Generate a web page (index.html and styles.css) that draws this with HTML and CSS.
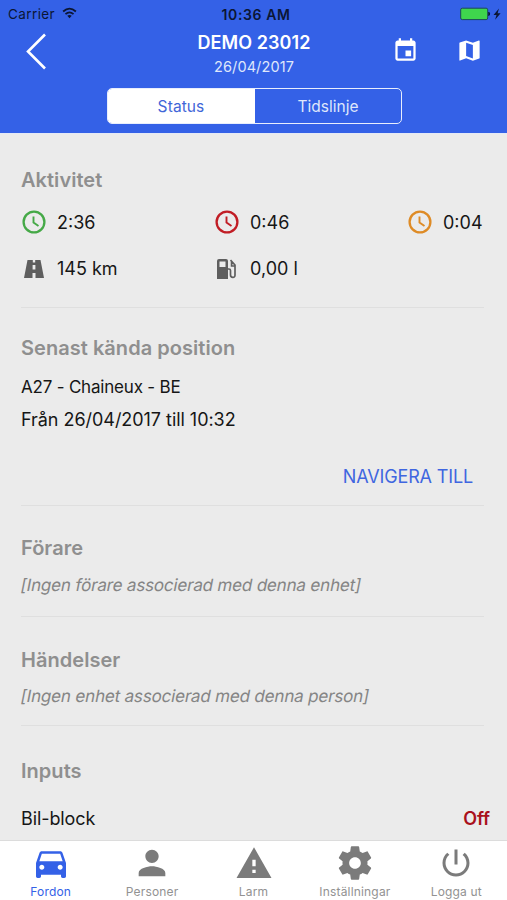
FILE: index.html
```html
<!DOCTYPE html>
<html lang="sv">
<head>
<meta charset="utf-8">
<title>DEMO 23012</title>
<link rel="stylesheet" href="styles.css">
</head>
<body>
<div class="app">
  <header class="header">
    <div class="statusbar">
      <div class="carrier"><span class="t-carrier">Carrier</span>
        <svg class="wifi" viewBox="0 0 16 12"><g fill="none" stroke="#0b1634" stroke-width="1.9"><path d="M1.2 4.4Q8-1.6 14.8 4.4"/><path d="M3.7 7.2Q8 3.4 12.3 7.2"/></g><path d="M5.6 9Q8 7 10.4 9L8 11.6z" fill="#0b1634"/></svg>
      </div>
      <div class="clock">10:36 AM</div>
      <div class="power">
        <svg class="battery" viewBox="0 0 42 14"><rect x=".7" y="1.2" width="27" height="11.4" rx="1.6" fill="#3fd54d" stroke="#1c4a54" stroke-width="1"/><path d="M28.8 5.2q1.8 1.6 0 3.4z" fill="#0b1634" stroke="#0b1634"/><path d="M39 1.5L33.5 8h3l-1.4 4.8L40.600 6.200h-3z" fill="#0b1634"/></svg>
      </div>
    </div>
    <div class="navbar">
      <svg class="back" viewBox="0 0 24 40"><path d="M21 3.500L4 20.500L21 37.500" fill="none" stroke="#fff" stroke-width="2.600"/></svg>
      <div class="titles"><div class="title"><span>DEMO 23012</span></div><div class="date"><span>26/04/2017</span></div></div>
      <div class="actions">
        <svg viewBox="0 0 24 24"><path d="M17 12h-5v5h5v-5zM16 1v2H8V1H6v2H5c-1.110 0-1.990.9-1.990 2L3 19c0 1.100.89 2 2 2h14c1.100 0 2-.9 2-2V5c0-1.100-.9-2-2-2h-1V1h-2zm3 18H5V8h14v11z"/></svg>
        <svg viewBox="0 0 24 24"><path d="M20.500 3l-.16.03L15 5.100 9 3 3.360 4.900c-.21.07-.36.25-.36.48V20.500c0 .28.22.5.5.5l.16-.03L9 18.900l6 2.100 5.640-1.900c.21-.07.36-.25.36-.48V3.500c0-.28-.22-.5-.5-.5zM15 19l-6-2.110V5l6 2.110V19z"/></svg>
      </div>
    </div>
    <div class="segments"><div class="segment active"><span>Status</span></div><div class="segment"><span>Tidslinje</span></div></div>
  </header>
  <main class="content">
    <section class="section activity">
      <h2><span>Aktivitet</span></h2>
      <div class="metrics">
        <div class="metric green"><svg viewBox="0 0 26 26"><g fill="none" stroke="currentColor" stroke-width="2.300"><circle cx="13" cy="13" r="10.400"/><path d="M12.500 7.500v6l5 3.500" stroke-width="1.900"/></g></svg><span>2:36</span></div>
        <div class="metric red"><svg viewBox="0 0 26 26"><g fill="none" stroke="currentColor" stroke-width="2.300"><circle cx="13" cy="13" r="10.400"/><path d="M12.500 7.500v6l5 3.500" stroke-width="1.900"/></g></svg><span>0:46</span></div>
        <div class="metric orange"><svg viewBox="0 0 26 26"><g fill="none" stroke="currentColor" stroke-width="2.300"><circle cx="13" cy="13" r="10.400"/><path d="M12.500 7.500v6l5 3.500" stroke-width="1.900"/></g></svg><span>0:04</span></div>
        <div class="metric grey"><svg viewBox="0 0 26 26"><path fill="currentColor" fill-rule="evenodd" d="M6.500 4h5.300v2.500h2.400V4h5.300L23 22h-8.500v-5h-3v5H3zM11.600 9v4.500h2.800V9z"/></svg><span>145 km</span></div>
        <div class="metric grey"><svg viewBox="0 0 26 26"><path fill="currentColor" fill-rule="evenodd" d="M5 3h7q2 0 2 2v18H3V5q0-2 2-2zM5.500 5.500V11h6V5.500z"/><path d="M13.500 13H15q1.500 0 1.500 1.500V19q0 2.300 2.300 2.300T21 19V9l-4.500-4.800M17.600 6v4H21" fill="none" stroke="currentColor" stroke-width="1.700"/></svg><span>0,00 l</span></div>
      </div>
    </section>
    <section class="section position">
      <h2><span>Senast kända position</span></h2>
      <p class="address"><span>A27 - Chaineux - BE</span></p>
      <p class="period"><span>Från 26/04/2017 till 10:32</span></p>
      <div class="navigate"><span>NAVIGERA TILL</span></div>
    </section>
    <section class="section driver">
      <h2><span>Förare</span></h2>
      <p class="empty"><span>[Ingen förare associerad med denna enhet]</span></p>
    </section>
    <section class="section events">
      <h2><span>Händelser</span></h2>
      <p class="empty"><span>[Ingen enhet associerad med denna person]</span></p>
    </section>
    <section class="section inputs">
      <h2><span>Inputs</span></h2>
      <div class="input-row"><span>Bil-block</span><span class="off">Off</span></div>
    </section>
  </main>
  <nav class="tabs">
    <div class="tab selected"><svg viewBox="0 0 24 24"><path d="M18.920 6.010C18.720 5.420 18.160 5 17.500 5h-11c-.66 0-1.210.42-1.420 1.010L3 12v8c0 .55.45 1 1 1h1c.55 0 1-.45 1-1v-1h12v1c0 .55.45 1 1 1h1c.55 0 1-.45 1-1v-8l-2.080-5.990zM6.500 16c-.83 0-1.500-.67-1.500-1.500S5.670 13 6.500 13s1.500.67 1.500 1.500S7.330 16 6.500 16zm11 0c-.83 0-1.500-.67-1.500-1.500s.67-1.500 1.500-1.500 1.500.67 1.500 1.500-.67 1.500-1.500 1.500zM5 11l1.500-4.500h11L19 11H5z"/></svg><span>Fordon</span></div>
    <div class="tab"><svg viewBox="0 0 24 24"><path d="M12 12c2.210 0 4-1.790 4-4s-1.790-4-4-4-4 1.790-4 4 1.790 4 4 4zm0 2c-2.670 0-8 1.340-8 4v2h16v-2c0-2.660-5.330-4-8-4z"/></svg><span>Personer</span></div>
    <div class="tab"><svg viewBox="0 0 24 24"><path d="M1.500 21h21L12 2.500 1.500 21zm11.500-3h-2v-2h2v2zm0-4h-2v-4h2v4z"/></svg><span>Larm</span></div>
    <div class="tab"><svg viewBox="0 0 24 24"><path d="M19.430 12.980c.04-.32.07-.64.07-.98s-.03-.66-.07-.98l2.110-1.650c.19-.15.24-.42.12-.64l-2-3.460c-.12-.22-.39-.3-.61-.22l-2.490 1c-.52-.4-1.080-.73-1.690-.98l-.38-2.650C14.460 2.180 14.250 2 14 2h-4c-.25 0-.46.18-.49.42l-.38 2.650c-.61.25-1.170.59-1.690.98l-2.490-1c-.23-.09-.49 0-.61.22l-2 3.460c-.13.22-.07.49.12.64l2.110 1.650c-.04.32-.07.65-.07.98s.03.66.07.98l-2.110 1.650c-.19.15-.24.42-.12.64l2 3.460c.12.22.39.3.61.22l2.490-1c.52.4 1.080.73 1.690.98l.38 2.650c.03.24.24.42.49.42h4c.25 0 .46-.18.49-.42l.38-2.650c.61-.25 1.170-.59 1.690-.98l2.490 1c.23.09.49 0 .61-.22l2-3.460c.12-.22.07-.49-.12-.64l-2.110-1.650zM12 15.500c-1.930 0-3.500-1.570-3.500-3.500s1.570-3.500 3.500-3.500 3.500 1.570 3.500 3.500-1.570 3.500-3.500 3.500z"/></svg><span>Inställningar</span></div>
    <div class="tab logout"><svg viewBox="0 0 24 24"><path d="M13 3h-2v10h2V3zm4.830 2.170l-1.420 1.420C17.990 7.860 19 9.810 19 12c0 3.870-3.130 7-7 7s-7-3.130-7-7c0-2.190 1.010-4.140 2.580-5.420L6.170 5.170C4.230 6.820 3 9.260 3 12c0 4.970 4.030 9 9 9s9-4.030 9-9c0-2.740-1.230-5.180-3.170-6.830z"/></svg><span>Logga ut</span></div>
  </nav>
</div>
</body>
</html>
```
FILE: styles.css
```css
* { box-sizing: border-box; }
body { margin: 0; background: #ebebeb; color: #161616; font-family: Inter, "Liberation Sans", sans-serif; }
h2, p { margin: 0; font-weight: 400; }
.app { display: flex; flex-direction: column; width: 507px; height: 900px; overflow: hidden; }
.header { height: 134px; flex: none; background: #3461e7; border-bottom: 1px solid #e4e9f6; color: #fff; }
.statusbar { height: 28px; display: grid; grid-template-columns: 1fr auto 1fr; align-items: center; padding: 0 5px 0 8px; color: #0b1634; font-size: 13.500px; }
.carrier { display: flex; align-items: center; gap: 7px; letter-spacing: .4px; }
.wifi { width: 15px; height: 12px; margin-top: -2px; }
.clock { font-size: 14px; font-weight: 600; letter-spacing: .6px; padding-left: 2px; }
.power { display: flex; justify-content: flex-end; }
.battery { width: 42px; height: 14px; }
.navbar { height: 60px; display: grid; grid-template-columns: 1fr auto 1fr; padding: 0 24px; }
.back { width: 24px; height: 40px; margin-top: 3px; }
.titles { text-align: center; line-height: 24px; padding: 3px 0 0 1px; }
.title { font-size: 18px; font-weight: 600; letter-spacing: .1px; }
.date { font-size: 14.500px; letter-spacing: .1px; color: #dfe7fb; }
.actions { display: flex; justify-content: flex-end; gap: 37px; padding-top: 9px; }
.actions svg { width: 27px; height: 27px; fill: #fff; }
.segments { width: 295px; height: 36px; margin: 0 auto; display: flex; border: 1.500px solid #e8eefd; border-radius: 5px; overflow: hidden; position: relative; left: 1px; }
.segment { flex: 1; display: flex; align-items: center; justify-content: center; font-size: 15.500px; color: #dfe7fb; }
.segment.active { background: #fff; color: #3f66d8; letter-spacing: .1px; padding-right: 1px; }
.content { flex: 1; overflow: hidden; padding: 0 23px 0 21px; }
.section { border-bottom: 1px solid #dfdfdf; }
h2 { color: #8f8f8f; font-size: 20px; line-height: 24px; font-weight: 600; letter-spacing: .04px; }
.activity { height: 174px; padding-top: 34px; }
.metrics { display: grid; grid-template-columns: 193px 193px 1fr; grid-auto-rows: 46.500px; margin-top: 7px; }
.metric { display: flex; align-items: center; gap: 10px; white-space: nowrap; font-size: 18px; }
.metric svg { width: 26px; height: 26px; flex: none; }
.metric span { color: #161616; }
.green { color: #45a947; }
.red { color: #c11d25; }
.orange { color: #de8b26; }
.grey { color: #5e5e5e; }
.position { height: 198px; padding-top: 28px; }
.address { font-size: 17px; letter-spacing: -.2px; line-height: 32px; margin-top: 11px; }
.period { font-size: 18px; letter-spacing: -.04px; line-height: 32px; margin-top: 1px; }
.navigate { text-align: right; padding-right: 11px; margin-top: 29px; font-size: 18px; letter-spacing: -.15px; line-height: 24px; color: #3f66e0; }
.driver { height: 111px; padding-top: 30px; }
.events { height: 109px; padding-top: 31px; }
.empty { color: #858585; font-size: 17px; letter-spacing: -.18px; line-height: 24px; margin-top: 13px; }
.empty span { display: inline-block; transform: skewX(-11deg); }
.events .empty { margin-top: 12px; }
.inputs { padding-top: 33px; border: 0; }
.input-row { display: flex; justify-content: space-between; font-size: 18px; letter-spacing: -.1px; line-height: 24px; margin: 24px -6px 0 0; }
.off { color: #a9101c; font-weight: 600; }
.tabs { flex: none; height: 60px; display: flex; background: #fff; border-top: 1px solid #dcdcdc; }
.tab { flex: 1; display: flex; flex-direction: column; align-items: center; color: #929292; font-size: 12px; line-height: 14px; letter-spacing: .18px; }
.tab svg { width: 40px; height: 40px; fill: #7b7b7b; margin: 2px 0 2px; }
.tab.selected { color: #3461e7; }
.tab.selected svg { fill: #3461e7; }
.tab.logout svg { width: 36px; height: 36px; margin: 4px 0; }
```
